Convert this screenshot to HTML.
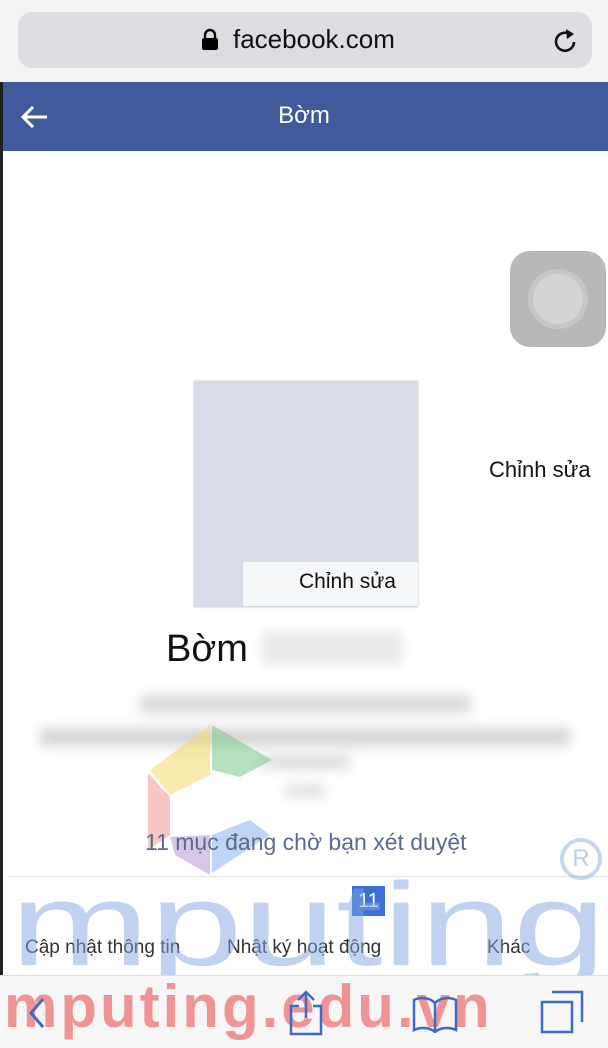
<!DOCTYPE html>
<html><head><meta charset="utf-8"><style>
body{margin:0;width:608px;height:1047px;overflow:hidden;background:#fff;font-family:"Liberation Sans",sans-serif;position:relative}
.a{position:absolute}
.blur{filter:blur(6px);}
</style></head><body>
<div class="a" style="left:0;top:0;width:608px;height:82px;background:#f4f4f5"></div>
<div class="a" style="left:18px;top:12px;width:574px;height:56px;border-radius:14px;background:#dcdde1"></div>
<svg class="a" style="left:201px;top:28px" width="18" height="22" viewBox="0 0 18 22"><path d="M4 10V7a5 5 0 0 1 10 0v3" stroke="#000" stroke-width="2.4" fill="none"/><rect x="1" y="10" width="16" height="12" rx="2"/></svg>
<div class="a" style="left:233px;top:24px;font-size:26px;color:#111">facebook.com</div>
<svg class="a" style="left:551px;top:26px" width="28" height="30" viewBox="0 0 28 30"><path d="M20 9a9 9 0 1 0 3 7" stroke="#111" stroke-width="2.6" fill="none"/><path d="M15 3l8 5-7 5z" fill="#111"/></svg>
<div class="a" style="left:0;top:82px;width:608px;height:69px;background:#405a9b"></div>
<svg class="a" style="left:20px;top:104px" width="30" height="26" viewBox="0 0 30 26"><path d="M27 13H4M13 3L3 13l10 10" stroke="#fff" stroke-width="3" fill="none"/></svg>
<div class="a" style="left:0;width:608px;top:102px;text-align:center;font-size:24px;color:#fff">Bờm</div>
<div class="a" style="left:0;top:82px;width:3px;height:965px;background:#222"></div>
<div class="a" style="left:510px;top:251px;width:96px;height:96px;border-radius:20px;background:#b8b8b8"></div>
<div class="a" style="left:533px;top:274px;width:50px;height:50px;border-radius:50%;background:#d4d4d4;box-shadow:0 0 0 5px #c6c6c6"></div>
<div class="a" style="left:489px;top:457px;font-size:22px;color:#111">Chỉnh sửa</div>
<div class="a" style="left:194px;top:381px;width:224px;height:226px;background:#d6dbe7;box-shadow:0 0 2px #bbb"></div>
<div class="a" style="left:243px;top:562px;width:175px;height:44px;background:#f5f6f8"></div>
<div class="a" style="left:299px;top:570px;font-size:21px;color:#111">Chỉnh sửa</div>
<div class="a" style="left:166px;top:628px;font-size:38px;color:#111">Bờm</div>
<div class="a blur" style="left:262px;top:632px;width:140px;height:32px;background:#e8e8e8"></div>
<div class="a blur" style="left:140px;top:695px;width:330px;height:18px;background:#d8d8d8"></div>
<div class="a blur" style="left:40px;top:728px;width:530px;height:18px;background:#d4d4d4"></div>
<div class="a blur" style="left:260px;top:755px;width:90px;height:14px;background:#dcdcdc"></div>
<div class="a blur" style="left:285px;top:785px;width:40px;height:12px;background:#dedede"></div>
<svg class="a" style="left:140px;top:725px;opacity:.55" width="140" height="150" viewBox="0 0 140 150"><polygon points="70,0 70,50 30,70 10,45" fill="#f6d86a"/><polygon points="72,0 132,35 100,52 72,45" fill="#7cc98a"/><polygon points="8,48 30,72 30,110 8,125" fill="#f59494"/><polygon points="30,112 70,110 70,150 35,130" fill="#b998d8"/><polygon points="72,110 110,95 130,110 72,148" fill="#8ab3ee"/></svg>
<div class="a" style="left:145px;top:829px;font-size:23px;color:#5b6b8e">11 mục đang chờ bạn xét duyệt</div>
<div class="a" style="left:8px;top:876px;width:600px;height:1px;background:#e6e6e6"></div>
<div class="a" style="left:352px;top:886px;width:33px;height:30px;background:#3b6fd6;color:#fff;font-size:20px;text-align:center;line-height:30px">11</div>
<div class="a" style="left:25px;top:937px;font-size:19px;color:#333">Cập nhật thông tin</div>
<div class="a" style="left:227px;top:937px;font-size:19px;color:#333">Nhật ký hoạt động</div>
<div class="a" style="left:487px;top:937px;font-size:19px;color:#333">Khác</div>
<div class="a" style="left:10px;top:870px;font-size:118px;color:rgba(130,165,225,.5);line-height:110px;transform-origin:0 0;transform:scaleX(1.42);white-space:nowrap">mputing</div>
<div class="a" style="left:560px;top:838px;width:34px;height:34px;border-radius:50%;border:4px solid rgba(130,165,225,.45);color:rgba(130,165,225,.55);font-size:24px;text-align:center;line-height:34px">R</div>
<div class="a" style="left:0;top:975px;width:608px;height:72px;background:#f6f6f6;border-top:1px solid #ddd"></div>
<div class="a" style="left:4px;top:972px;font-size:60px;font-weight:bold;color:rgba(235,110,110,.72);letter-spacing:3px">mputing.edu.vn</div>
<svg class="a" style="left:25px;top:995px" width="24" height="36"><path d="M18 4L6 18l12 14" stroke="#3f69c8" stroke-width="3" fill="none"/></svg>
<svg class="a" style="left:288px;top:990px" width="36" height="46"><path d="M11 16H3v28h30V16h-8M18 2v26M10 10l8-8 8 8" stroke="#3f69c8" stroke-width="2.5" fill="none"/></svg>
<svg class="a" style="left:412px;top:995px" width="46" height="38"><path d="M23 8C17 2 8 2 2 5v30c6-3 15-3 21 2 6-5 15-5 21-2V5C38 2 29 2 23 8v29" stroke="#3f69c8" stroke-width="2.5" fill="none"/></svg>
<svg class="a" style="left:540px;top:990px" width="44" height="44"><path d="M12 2h30v30M2 12h30v30H2z" stroke="#3f69c8" stroke-width="2.5" fill="none"/></svg>
</body></html>
